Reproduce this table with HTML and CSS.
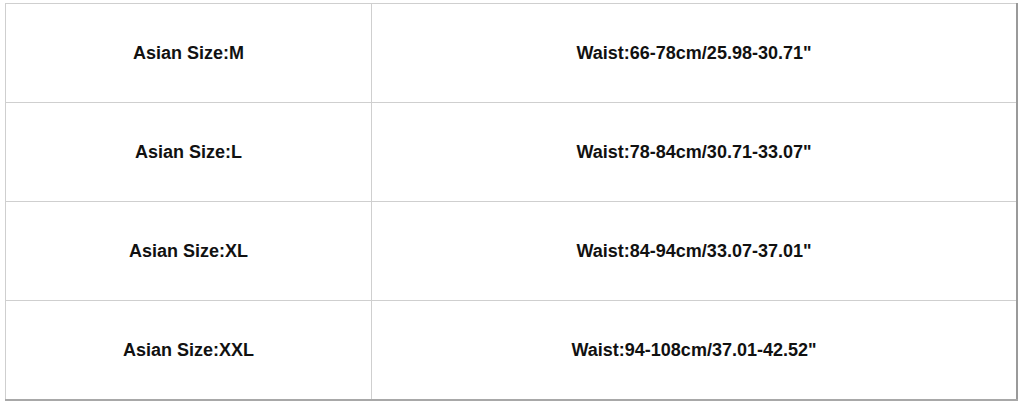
FILE: index.html
```html
<!DOCTYPE html>
<html>
<head>
<meta charset="utf-8">
<link rel="stylesheet" href="styles.css">
</head>
<body>
<div class="page">
  <table class="sizes">
    <tr><td class="size">Asian Size:M</td><td class="waist">Waist:66-78cm/25.98-30.71"</td></tr>
    <tr><td class="size">Asian Size:L</td><td class="waist">Waist:78-84cm/30.71-33.07"</td></tr>
    <tr><td class="size">Asian Size:XL</td><td class="waist">Waist:84-94cm/33.07-37.01"</td></tr>
    <tr><td class="size">Asian Size:XXL</td><td class="waist">Waist:94-108cm/37.01-42.52"</td></tr>
  </table>
</div>
</body>
</html>
```
FILE: styles.css
```css
html, body {
  margin: 0;
  padding: 0;
  background: #ffffff;
}
.page {
  padding: 3px 6px 0 5px;
}
.sizes {
  width: 1013px;
  border-collapse: collapse;
  border-top: 1px solid #cfcfcf;
  border-left: 1px solid #cfcfcf;
  border-right: 2px solid #9a9a9a;
  border-bottom: 2px solid #a8a8a8;
  font-family: "Liberation Sans", Arial, sans-serif;
  font-weight: bold;
  font-size: 18px;
  color: #111111;
}
.sizes td {
  height: 98px;
  padding: 0;
  text-align: center;
  vertical-align: middle;
  border-top: 1px solid #cfcfcf;
}
.sizes td.size {
  width: 365px;
  border-right: 1px solid #cfcfcf;
}
```
